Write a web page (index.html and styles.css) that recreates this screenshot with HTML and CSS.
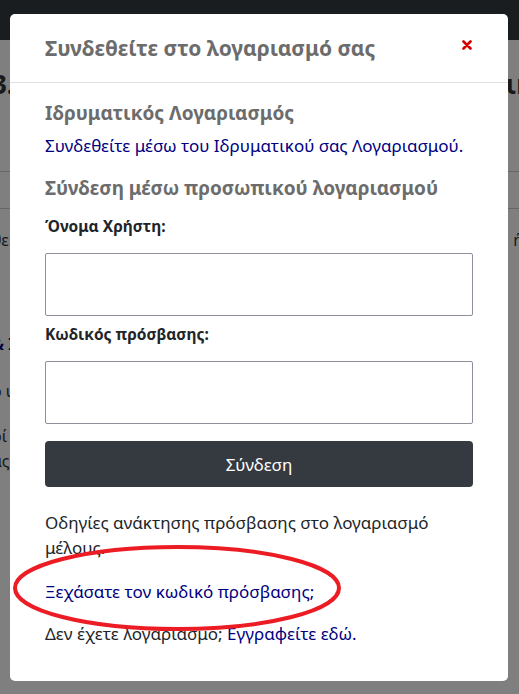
FILE: index.html
```html
<!DOCTYPE html>
<html lang="el">
<head>
<meta charset="utf-8">
<link rel="stylesheet" href="styles.css">
</head>
<body>
<header class="navbar"></header>
<main class="page">
  <div class="page-row page-title"><span>3. Α</span><span>ιη</span></div>
  <div class="rule"></div>
  <div class="rule rule-2"></div>
  <div class="page-row page-text"><span>θε</span><span>ήμ</span></div>
  <div class="page-row page-link"><span>&amp; Ι</span><span></span></div>
  <div class="page-row page-text2"><span>ο υ</span><span></span></div>
  <div class="page-row page-text3"><span>οί</span><span></span></div>
  <div class="page-row page-text4"><span>ας</span><span></span></div>
</main>

<div class="backdrop"></div>
<div class="modal">
  <div class="modal-header">
    <h2 class="modal-title">Συνδεθείτε στο λογαριασμό σας</h2>
    <svg class="close" width="10" height="10" viewBox="0 0 10 10"><path d="M1.5 1.5 L8.5 8.5 M8.5 1.5 L1.5 8.5" stroke="#d40000" stroke-width="2.6" stroke-linecap="round"/></svg>
  </div>
  <div class="modal-body">
    <h3 class="section-title">Ιδρυματικός Λογαριασμός</h3>
    <a class="link intro" href="#">Συνδεθείτε μέσω του Ιδρυματικού σας Λογαριασμού.</a>
    <h3 class="section-title second">Σύνδεση μέσω προσωπικού λογαριασμού</h3>
    <label class="label">Όνομα Χρήστη:</label>
    <div class="input"></div>
    <label class="label second-label">Κωδικός πρόσβασης:</label>
    <div class="input"></div>
    <button class="btn">Σύνδεση</button>
    <p class="text">Οδηγίες ανάκτησης πρόσβασης στο λογαριασμό μέλους.</p>
    <p class="text forgot"><a class="link" href="#">Ξεχάσατε τον κωδικό πρόσβασης;</a></p>
    <p class="text last">Δεν έχετε λογαριασμό; <a class="link" href="#">Εγγραφείτε εδώ.</a></p>
  </div>
  <svg class="circle" width="340" height="100" viewBox="0 0 340 100">
    <ellipse cx="167" cy="48" rx="162" ry="41" fill="none" stroke="#ec1c24" stroke-width="4"/>
  </svg>
</div>
</body>
</html>
```

FILE: styles.css
```css
* { box-sizing: border-box; }
html, body { margin: 0; padding: 0; }
body {
  width: 519px;
  height: 694px;
  overflow: hidden;
  background: #fff;
  font-family: "Noto Sans", "Open Sans", sans-serif;
  color: #212529;
  position: relative;
}
.navbar { height: 40px; background: #343a40; }
.page { padding-top: 26px; }
.page-row {
  display: flex;
  justify-content: space-between;
  margin: 0 -14px 0 -8px;
}
.page-title { font-size: 26px; font-weight: 700; color: #333; height: 40px; }
.rule { height: 1px; background: #ccc; margin-top: 65px; }
.rule-2 { margin-top: 36px; }
.page-text { font-size: 16px; margin-top: 20px; color: #333; }
.page-link { font-size: 16px; color: #000080; margin-top: 82px; font-weight: 700; }
.page-text2 { font-size: 16px; margin-top: 25px; color: #333; }
.page-text3 { font-size: 16px; margin-top: 23px; color: #333; }
.page-text4 { font-size: 16px; margin-top: 3px; color: #333; }

.backdrop {
  position: absolute;
  inset: 0;
  background: rgba(0, 0, 0, 0.5);
}
.modal {
  position: absolute;
  left: 10px;
  top: 14px;
  width: 498px;
  height: 667px;
  background: #fff;
  border-radius: 5px;
}
.modal-header {
  height: 69px;
  border-bottom: 1px solid #dee2e6;
  display: flex;
  align-items: center;
  justify-content: space-between;
  padding: 0 36px 0 35px;
}
.modal-title {
  margin: 0;
  font-size: 21px;
  line-height: 28px;
  font-weight: 700;
  color: #6c6c6c;
}
.close { margin-top: -6px; }
.modal-body {
  padding: 17px 35px 0 35px;
  display: flex;
  flex-direction: column;
  align-items: flex-start;
}
.section-title {
  margin: 0;
  font-size: 19px;
  font-weight: 700;
  color: #6c6c6c;
  line-height: 26px;
}
.section-title.second { margin-top: 17px; }
.link {
  color: #000080;
  text-decoration: none;
  font-size: 17px;
  line-height: 24px;
}
.intro { margin-top: 8px; }
.label {
  font-weight: 700;
  font-size: 15.5px;
  line-height: 24px;
  margin-top: 13px;
}
.second-label { margin-top: 6px; }
.input {
  width: 428px;
  height: 63px;
  border: 1px solid #8f8f9d;
  border-radius: 2px;
  margin-top: 15px;
}
.btn {
  width: 428px;
  height: 46px;
  background: #343a40;
  color: #fff;
  border: 0;
  border-radius: 4px;
  font-family: inherit;
  font-size: 17px;
  margin-top: 17px;
}
.text {
  margin: 23px 0 0 0;
  font-size: 17px;
  line-height: 25px;
  color: #212529;
  width: 428px;
}
.forgot { margin-top: 19px; }
.last { margin-top: 17px; }
.circle {
  position: absolute;
  left: 0;
  top: 526px;
}
```
